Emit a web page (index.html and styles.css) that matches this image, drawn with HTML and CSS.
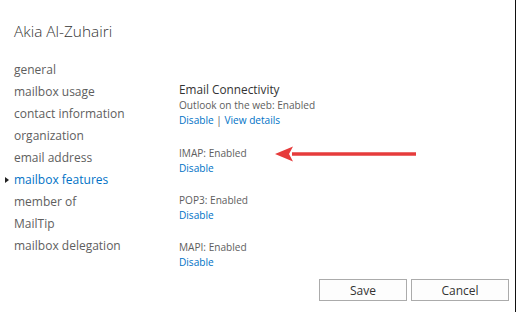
FILE: index.html
```html
<!doctype html>
<html>
	<head>
		<meta charset="utf-8">
		<link rel="stylesheet" href="styles.css">
	</head>
	<body>
		<div id="dialog">
			<div class="title">Akia Al-Zuhairi</div>

			<div class="main">
				<ul class="nav">
					<li>general</li>
					<li>mailbox usage</li>
					<li>contact information</li>
					<li>organization</li>
					<li>email address</li>
					<li class="selected">mailbox features</li>
					<li>member of</li>
					<li>MailTip</li>
					<li>mailbox delegation</li>
				</ul>

				<div class="content">
					<div class="heading">Email Connectivity</div>

					<div class="group first">
						<div class="label">Outlook on the web: Enabled</div>
						<div class="links"><a>Disable</a> | <a>View details</a></div>
					</div>

					<div class="group">
						<div class="label">IMAP: Enabled</div>
						<div class="links"><a>Disable</a></div>
						<svg class="arrow" width="146" height="18" viewBox="0 0 146 18">
							<path d="M142 9 L18 9" stroke="#e63b3b" stroke-width="3.4" stroke-linecap="butt"/>
							<path d="M1 9 L19 1.5 L15 9 L19 16.5 Z" fill="#e63b3b"/>
						</svg>
					</div>

					<div class="group">
						<div class="label">POP3: Enabled</div>
						<div class="links"><a>Disable</a></div>
					</div>

					<div class="group">
						<div class="label">MAPI: Enabled</div>
						<div class="links"><a>Disable</a></div>
					</div>
				</div>
			</div>

			<div class="buttons">
				<button class="save">Save</button>
				<button class="cancel">Cancel</button>
			</div>
		</div>
	</body>
</html>
```

FILE: styles.css
```css
body, html {
	margin: 0;
	padding: 0;
	background: white;
	font-family: "Segoe UI", "Open Sans", sans-serif;
}

#dialog {
	width: 515px;
	height: 312px;
	border-right: 1px solid #111;
	position: relative;
}

.title {
	padding: 22px 0 0 14px;
	height: 37px;
	font-size: 15.4px;
	font-weight: 300;
	color: #333;
	line-height: 20px;
}

.main {
	display: flex;
}

.nav {
	list-style: none;
	margin: 0;
	padding: 0 0 0 14px;
	width: 151px;
}

.nav li {
	font-size: 12px;
	line-height: 22px;
	height: 22px;
	color: #5e5e5e;
	position: relative;
	white-space: nowrap;
}

.nav li.selected {
	color: #0072c6;
}

.nav li.selected::before {
	content: "";
	position: absolute;
	left: -9px;
	top: 8px;
	border-left: 4px solid #222;
	border-top: 3.5px solid transparent;
	border-bottom: 3.5px solid transparent;
}

.content {
	padding: 22px 0 0 14px;
	flex: 1;
}

.heading {
	font-size: 11.8px;
	line-height: 17px;
	color: #333;
}

.group {
	position: relative;
	height: 47px;
}

.group.first {
	height: 48px;
}

.label, .links {
	font-size: 10.1px;
	line-height: 15px;
	color: #5e5e5e;
}

.links a {
	color: #0072c6;
}

.arrow {
	position: absolute;
	left: 95px;
	top: -1px;
}

.buttons {
	position: absolute;
	right: 6px;
	bottom: 11px;
	display: flex;
	gap: 4px;
}

.buttons button {
	height: 22px;
	border: 1px solid #ababab;
	background: #fdfdfd;
	font-family: inherit;
	font-size: 12px;
	color: #333;
	padding: 0;
}

.save {
	width: 88px;
}

.cancel {
	width: 98px;
}
```
